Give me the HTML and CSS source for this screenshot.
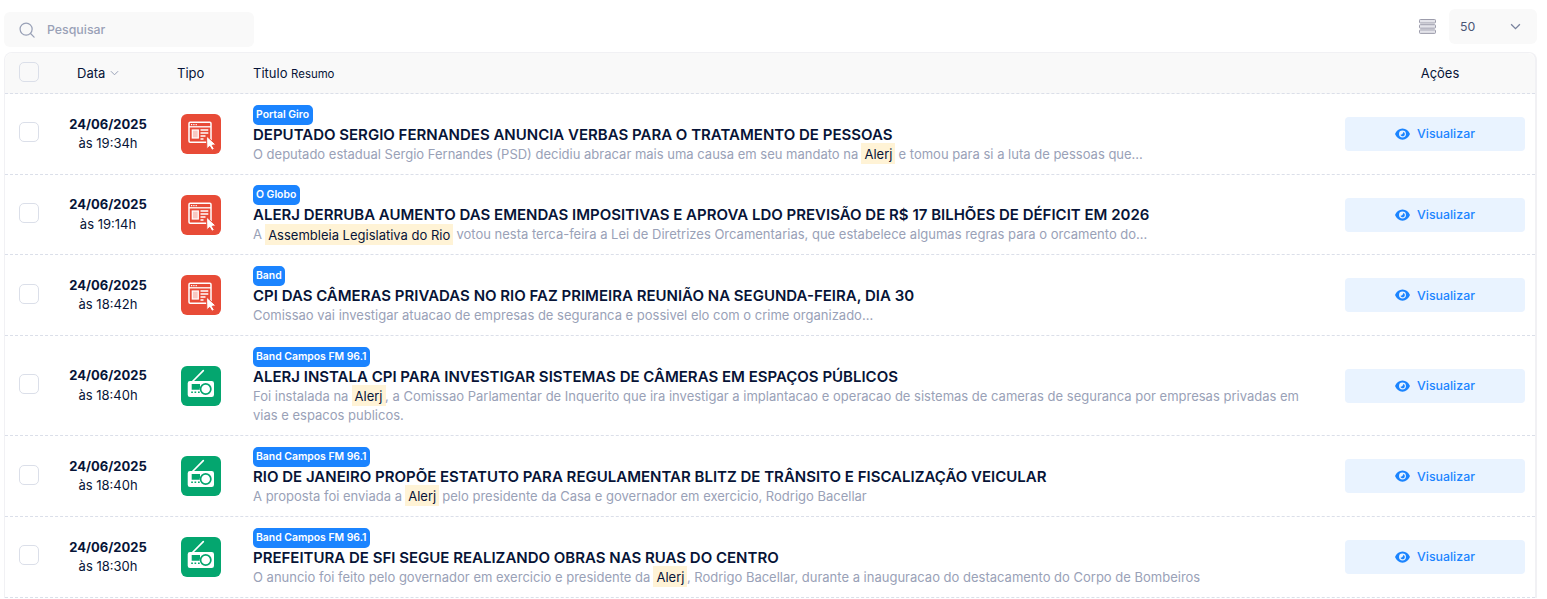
FILE: index.html
```html
<!DOCTYPE html>
<html lang="pt-BR">
<head>
<meta charset="utf-8">
<title>Pesquisar</title>
<link rel="stylesheet" href="styles.css">
</head>
<body>
<svg class="defs" width="0" height="0" aria-hidden="true">
  <symbol id="web" viewBox="0 0 40 40">
    <rect x="8" y="8.300" width="22" height="20" rx="1.200" fill="none" stroke="#fff" stroke-width="1.500"/>
    <path d="M8 12.800h22" stroke="#fff" stroke-width="1.300"/>
    <path d="M10 10.600h1.200M12.300 10.600h1.200M14.600 10.600h1.200" stroke="#fff" stroke-width="1.200"/>
    <rect x="11.300" y="16" width="6" height="8" fill="#f9c9c2" stroke="#fff" stroke-width="1.200"/>
    <path d="M19.500 16h7.800M19.500 19h7.800M19.500 22h5M19.500 25h3" stroke="#fff" stroke-width="1.400"/>
    <path d="M25.500 22l9.500 8.800-3.800.5 2.200 3.700-2.500 1.300-2.200-4-2.800 2.600z" fill="#fff" stroke="#e84b37" stroke-width="1"/>
  </symbol>
  <symbol id="radio" viewBox="0 0 40 40">
    <path d="M11.500 15.500 22.300 4.700" stroke="#fff" stroke-width="1.700" stroke-linecap="round"/>
    <path fill-rule="evenodd" fill="#fff" d="M9 15h21.700a2.300 2.300 0 0 1 2.300 2.300v11.400a2.300 2.300 0 0 1-2.300 2.300H9a2.300 2.300 0 0 1-2.300-2.300V17.300A2.300 2.300 0 0 1 9 15zm1.700 3v5.700H19V18zm14-1a6 6 0 1 0 0 12 6 6 0 0 0 0-12zm0 1.700a4.300 4.300 0 1 1 0 8.600 4.300 4.300 0 0 1 0-8.600zM10.200 25.500v1.500h1.700v-1.500zm3.300 0v1.500h1.700v-1.500zm3.500 0v1.500h1.700v-1.500z"/>
  </symbol>
  <symbol id="eye" viewBox="0 0 16 12">
    <path fill="#1b84ff" fill-rule="evenodd" d="M8 0c3.700 0 6.600 2.400 8 6-1.400 3.600-4.300 6-8 6S1.400 9.600 0 6c1.400-3.600 4.300-6 8-6zm0 2.300a3.700 3.700 0 1 0 0 7.400 3.700 3.700 0 0 0 0-7.400zM8.800 3.800a2.400 2.400 0 1 1-3 3c1.500.2 2.800-1.300 3-3z"/>
  </symbol>
</svg>

<header class="toolbar">
  <label class="search">
    <svg class="search-icon" viewBox="0 0 18 18" width="16" height="16"><circle cx="8" cy="8" r="6.800" fill="none" stroke="#99a1b7" stroke-width="1.400"/><path d="m13 13 4 4" stroke="#99a1b7" stroke-width="1.400" stroke-linecap="round"/></svg>
    <span>Pesquisar</span>
  </label>
  <div class="toolbar-right">
    <svg class="rows-icon" viewBox="0 0 17 15" width="17" height="15"><g fill="#e4e4ea" stroke="#9c9cab" stroke-width="1"><rect x=".5" y=".5" width="16" height="3.500" rx=".8"/><rect x=".5" y="5.700" width="16" height="3.500" rx=".8"/><rect x=".5" y="10.900" width="16" height="3.500" rx=".8"/></g></svg>
    <div class="page-size"><span>50</span><svg viewBox="0 0 12 8" width="11" height="7"><path d="m1 1.500 5 5 5-5" fill="none" stroke="#78829d" stroke-width="1.500"/></svg></div>
  </div>
</header>

<main class="table">
  <div class="row head">
    <div class="c-check"><span class="checkbox"></span></div>
    <div class="c-date head-date">Data <svg viewBox="0 0 10 6" width="9" height="6"><path d="m1 1 4 4 4-4" fill="none" stroke="#99a1b7" stroke-width="1.100"/></svg></div>
    <div class="c-type">Tipo</div>
    <div class="c-main">Titulo <small>Resumo</small></div>
    <div class="c-act">Ações</div>
  </div>

  <article class="row">
    <div class="c-check"><span class="checkbox"></span></div>
    <div class="c-date"><b>24/06/2025</b><span>às 19:34h</span></div>
    <div class="c-type"><span class="type red"><svg><use href="#web"/></svg></span></div>
    <div class="c-main"><span class="badge">Portal Giro</span><h2>DEPUTADO SERGIO FERNANDES ANUNCIA VERBAS PARA O TRATAMENTO DE PESSOAS</h2><p>O deputado estadual Sergio Fernandes (PSD) decidiu abracar mais uma causa em seu mandato na <mark>Alerj</mark> e tomou para si a luta de pessoas que...</p></div>
    <div class="c-act"><a class="btn"><svg><use href="#eye"/></svg>Visualizar</a></div>
  </article>

  <article class="row">
    <div class="c-check"><span class="checkbox"></span></div>
    <div class="c-date"><b>24/06/2025</b><span>às 19:14h</span></div>
    <div class="c-type"><span class="type red"><svg><use href="#web"/></svg></span></div>
    <div class="c-main"><span class="badge">O Globo</span><h2>ALERJ DERRUBA AUMENTO DAS EMENDAS IMPOSITIVAS E APROVA LDO PREVISÃO DE R$ 17 BILHÕES DE DÉFICIT EM 2026</h2><p>A <mark>Assembleia Legislativa do Rio</mark> votou nesta terca-feira a Lei de Diretrizes Orcamentarias, que estabelece algumas regras para o orcamento do...</p></div>
    <div class="c-act"><a class="btn"><svg><use href="#eye"/></svg>Visualizar</a></div>
  </article>

  <article class="row">
    <div class="c-check"><span class="checkbox"></span></div>
    <div class="c-date"><b>24/06/2025</b><span>às 18:42h</span></div>
    <div class="c-type"><span class="type red"><svg><use href="#web"/></svg></span></div>
    <div class="c-main"><span class="badge">Band</span><h2>CPI DAS CÂMERAS PRIVADAS NO RIO FAZ PRIMEIRA REUNIÃO NA SEGUNDA-FEIRA, DIA 30</h2><p>Comissao vai investigar atuacao de empresas de seguranca e possivel elo com o crime organizado...</p></div>
    <div class="c-act"><a class="btn"><svg><use href="#eye"/></svg>Visualizar</a></div>
  </article>

  <article class="row">
    <div class="c-check"><span class="checkbox"></span></div>
    <div class="c-date"><b>24/06/2025</b><span>às 18:40h</span></div>
    <div class="c-type"><span class="type green"><svg><use href="#radio"/></svg></span></div>
    <div class="c-main"><span class="badge">Band Campos FM 96.1</span><h2>ALERJ INSTALA CPI PARA INVESTIGAR SISTEMAS DE CÂMERAS EM ESPAÇOS PÚBLICOS</h2><p>Foi instalada na <mark>Alerj</mark>, a Comissao Parlamentar de Inquerito que ira investigar a implantacao e operacao de sistemas de cameras de seguranca por empresas privadas em vias e espacos publicos.</p></div>
    <div class="c-act"><a class="btn"><svg><use href="#eye"/></svg>Visualizar</a></div>
  </article>

  <article class="row">
    <div class="c-check"><span class="checkbox"></span></div>
    <div class="c-date"><b>24/06/2025</b><span>às 18:40h</span></div>
    <div class="c-type"><span class="type green"><svg><use href="#radio"/></svg></span></div>
    <div class="c-main"><span class="badge">Band Campos FM 96.1</span><h2>RIO DE JANEIRO PROPÕE ESTATUTO PARA REGULAMENTAR BLITZ DE TRÂNSITO E FISCALIZAÇÃO VEICULAR</h2><p>A proposta foi enviada a <mark>Alerj</mark> pelo presidente da Casa e governador em exercicio, Rodrigo Bacellar</p></div>
    <div class="c-act"><a class="btn"><svg><use href="#eye"/></svg>Visualizar</a></div>
  </article>

  <article class="row">
    <div class="c-check"><span class="checkbox"></span></div>
    <div class="c-date"><b>24/06/2025</b><span>às 18:30h</span></div>
    <div class="c-type"><span class="type green"><svg><use href="#radio"/></svg></span></div>
    <div class="c-main"><span class="badge">Band Campos FM 96.1</span><h2>PREFEITURA DE SFI SEGUE REALIZANDO OBRAS NAS RUAS DO CENTRO</h2><p>O anuncio foi feito pelo governador em exercicio e presidente da <mark>Alerj</mark>, Rodrigo Bacellar, durante a inauguracao do destacamento do Corpo de Bombeiros</p></div>
    <div class="c-act"><a class="btn"><svg><use href="#eye"/></svg>Visualizar</a></div>
  </article>
</main>
</body>
</html>
```
FILE: styles.css
```css
* { box-sizing: border-box; }
html, body { height: 100%; overflow: hidden; }
body {
  margin: 0;
  padding: 9px 10px 0 4px;
  background: #fff;
  font-family: Inter, "Liberation Sans", sans-serif;
  font-size: 13px;
  color: #071437;
}
.defs { position: absolute; }
.toolbar {
  display: flex;
  justify-content: space-between;
  align-items: flex-start;
  height: 38px;
  margin-bottom: 5px;
}
.search {
  display: flex;
  align-items: center;
  gap: 12px;
  width: 250px;
  height: 35px;
  margin-top: 3px;
  padding-left: 15px;
  background: #f9f9f9;
  border-radius: 6px;
  color: #99a1b7;
  font-size: 12.350px;
  font-weight: 500;
}
.toolbar-right { display: flex; align-items: center; gap: 13px; }
.rows-icon { display: block; }
.page-size {
  display: flex;
  justify-content: space-between;
  align-items: center;
  width: 88px;
  height: 35px;
  padding: 0 16px 1px 11px;
  background: #f9f9f9;
  border-radius: 6px;
  color: #4b5675;
  font-size: 12.350px;
  font-weight: 400;
}
.table {
  border: 1px solid #f1f1f4;
  border-width: 1px 2px 0 1px;
  border-radius: 8px 8px 0 0;
}
.row {
  display: grid;
  grid-template-columns: 42px 122px 74px 1fr 210px;
  align-items: center;
  border-bottom: 1px dashed #dbdfe9;
}
.head {
  height: 41px;
  background: #f9f9f9;
  border-radius: 8px 8px 0 0;
  font-size: 13px;
  font-weight: 400;
}
.c-check { padding-left: 14px; }
.checkbox {
  display: block;
  width: 20px;
  height: 20px;
  margin-bottom: 3px;
  background: #fff;
  border: 1px solid #dbdfe9;
  border-radius: 5px;
}
.head .checkbox { background: #f9f9f9; }
.c-date { display: flex; flex-direction: column; align-items: center; gap: 2.500px; line-height: 17px; }
.c-date b { font-weight: 700; }
.head-date { flex-direction: row; justify-content: flex-start; gap: 5px; padding-left: 30px; }
.c-type { display: flex; padding-left: 12px; }
.head .c-type { padding-left: 8px; }
.type {
  display: block;
  width: 40px;
  height: 40px;
  border-radius: 6px;
}
.type svg { display: block; width: 40px; height: 40px; }
.red { background: #e84b37; }
.green { background: #04a66f; }
.c-main { padding: 10.700px 15px 9.500px 10px; min-width: 0; }
.head .c-main { padding: 0 0 0 10px; }
.head small { font-size: 11.400px; font-weight: 400; }
.badge {
  display: block;
  width: fit-content;
  height: 20px;
  padding: 0 3.500px 0 3px;
  background: #1b84ff;
  border-radius: 5px;
  color: #fff;
  font-size: 10.400px;
  font-weight: 600;
  line-height: 20px;
}
h2 {
  margin: 0;
  font-size: 15px;
  font-weight: 600;
  line-height: 20px;
  color: #071437;
}
p {
  margin: 0;
  font-size: 13px;
  line-height: 19.500px;
  color: #99a1b7;
}
mark {
  background: #fff3d6;
  color: #071437;
  padding: 2.500px 3px;
  margin: 0 -.5px;
}
.c-act { display: flex; justify-content: flex-end; padding-right: 10px; }
.head .c-act { justify-content: center; padding: 0 0 0 20px; }
.btn {
  display: flex;
  justify-content: center;
  align-items: center;
  gap: 7px;
  width: 180px;
  height: 34px;
  background: #e9f3ff;
  border-radius: 4px;
  color: #1b84ff;
  font-size: 12.350px;
  font-weight: 500;
}
.btn svg { width: 15px; height: 12px; }
```
